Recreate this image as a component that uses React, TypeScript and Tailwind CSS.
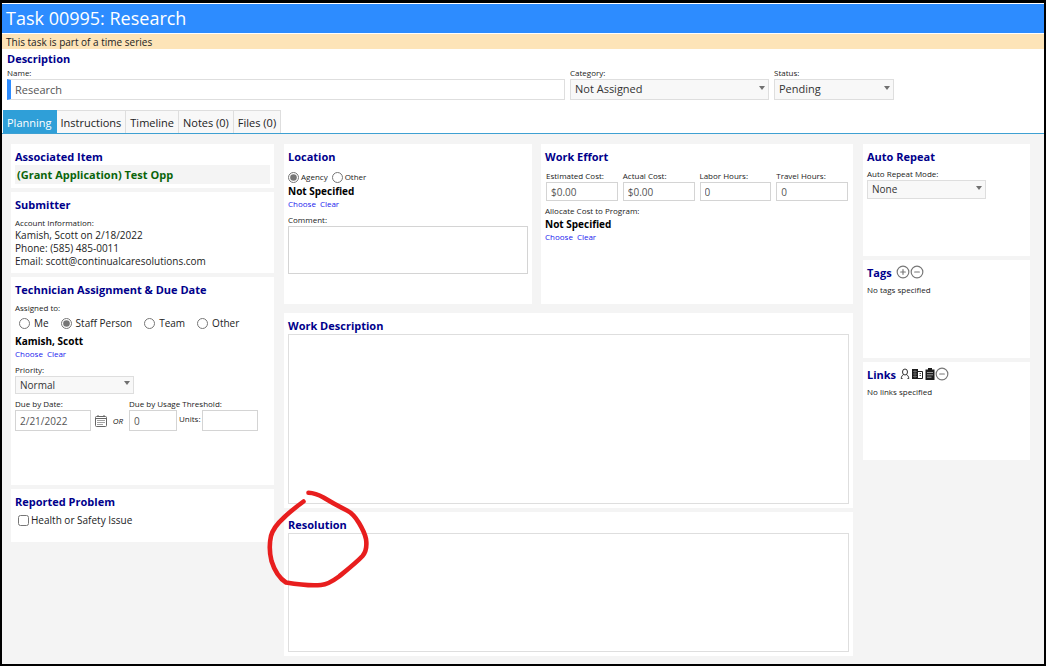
import React, { useState } from 'react';
import { CircleMinus, CirclePlus } from 'lucide-react';

const tabs = ['Planning', 'Instructions', 'Timeline', 'Notes (0)', 'Files (0)'];
const assignees = ['Me', 'Staff Person', 'Team', 'Other'];

const effortFields = [
  { id: 'estimated', label: 'Estimated Cost:', value: '$0.00' },
  { id: 'actual', label: 'Actual Cost:', value: '$0.00' },
  { id: 'labor', label: 'Labor Hours:', value: '0' },
  { id: 'travel', label: 'Travel Hours:', value: '0' },
];

interface PanelProps {
  title: string;
  className?: string;
  actions?: React.ReactNode;
  children?: React.ReactNode;
}

const Panel: React.FC<PanelProps> = ({ title, className = '', actions, children }) => (
  <section className={`bg-white px-1 pt-[5px] ${className}`}>
    <div className="flex items-start gap-1">
      <h2 className="text-[11px] leading-4 font-bold text-[#00008b]">{title}</h2>
      {actions}
    </div>
    {children}
  </section>
);

interface FieldLabelProps {
  htmlFor?: string;
  children: React.ReactNode;
}

const FieldLabel: React.FC<FieldLabelProps> = ({ htmlFor, children }) => (
  <label htmlFor={htmlFor} className="block text-[8px] leading-3 whitespace-nowrap text-[#222]">
    {children}
  </label>
);

interface DropdownProps {
  id: string;
  options: string[];
  className: string;
}

const Dropdown: React.FC<DropdownProps> = ({ id, options, className }) => (
  <div className="relative">
    <select
      id={id}
      className={`block w-full appearance-none border border-[#dedede] bg-[#f8f8f8] px-1 text-[#333] ${className}`}
    >
      {options.map((option) => (
        <option key={option}>{option}</option>
      ))}
    </select>
    <svg className="pointer-events-none absolute top-1/2 right-[3px] -mt-1 h-1 w-2" viewBox="0 0 8 4">
      <path d="M1 0h6L4 4z" fill="#707070" />
    </svg>
  </div>
);

const ChooseClear: React.FC = () => (
  <div className="flex gap-1 text-[8px] leading-3 text-[#1a1aee]">
    <a href="#choose">Choose</a>
    <a href="#clear">Clear</a>
  </div>
);

const CalendarIcon: React.FC = () => (
  <svg width="12" height="12" viewBox="0 0 12 12" fill="none" stroke="#666">
    <rect x="0.5" y="1.5" width="11" height="10" rx="1" />
    <path d="M0.5 3.5h11M3 0v2M9 0v2" />
    <path d="M2.5 5.5h7M2.5 7.5h7M2.5 9.5h5" stroke="#444" strokeDasharray="1 1" />
  </svg>
);

const PersonIcon: React.FC = () => (
  <svg width="10" height="12" viewBox="0 0 10 12" fill="none" stroke="#333">
    <ellipse cx="5" cy="4" rx="2.5" ry="3" />
    <path d="M3.6 6.6C2 7.4 1.4 8.600 1.200 10.500h1.300M6.400 6.600C8 7.400 8.600 8.600 8.800 10.500H7.500" />
  </svg>
);

const BuildingIcon: React.FC = () => (
  <svg width="11" height="12" viewBox="0 0 11 12">
    <path d="M0 1h6v10H0z" fill="#1c1c1c" />
    <path d="M1 3.500h4M1 6h4M1 8.500h4M3 2v8" stroke="#999" strokeWidth="0.5" />
    <path d="M6 3.500h4.500v7H6" fill="none" stroke="#1c1c1c" />
    <path d="M7.500 5.500H9M7.500 7.500H9" stroke="#555" />
  </svg>
);

const ClipboardIcon: React.FC = () => (
  <svg width="10" height="12" viewBox="0 0 10 12">
    <path d="M0.500 1.500h2.500V0h4v1.500h2.500V12h-9z" fill="#1c1c1c" />
    <path d="M2 4.500h6M2 6.800h6M2 9.200h4.500" stroke="#bbb" strokeWidth="0.8" />
  </svg>
);

export default function App() {
  const [activeTab, setActiveTab] = useState('Planning');
  const [assignee, setAssignee] = useState('Staff Person');
  const [location, setLocation] = useState('Agency');

  return (
    <div className="flex min-h-screen flex-col border-x-2 border-t-[3px] border-b-2 border-black bg-white font-['Open_Sans','Noto_Sans',sans-serif] text-[#222]">
      <header className="mt-px bg-[#2d8cff] px-1 pb-px text-white">
        <h1 className="text-lg leading-7">Task 00995: Research</h1>
      </header>
      <p className="mt-px bg-[#fde4b8] px-1 pt-px text-[10px] leading-[14px]">
        This task is part of a time series
      </p>

      <section className="px-[5px] pt-0.5">
        <h2 className="text-[11px] leading-4 font-bold text-[#00008b]">Description</h2>
        <div className="flex gap-[5px]">
          <div className="max-w-[558px] flex-1">
            <FieldLabel htmlFor="name">Name:</FieldLabel>
            <input
              id="name"
              defaultValue="Research"
              className="block h-[21px] w-full border border-l-4 border-[#dedede] border-l-[#2d8cff] px-1 text-[11px] text-[#555]"
            />
          </div>
          <div className="w-[199px]">
            <FieldLabel htmlFor="category">Category:</FieldLabel>
            <Dropdown id="category" options={['Not Assigned']} className="h-[21px] text-[11px]" />
          </div>
          <div className="w-[120px]">
            <FieldLabel htmlFor="status">Status:</FieldLabel>
            <Dropdown id="status" options={['Pending']} className="h-[21px] text-[11px]" />
          </div>
        </div>
      </section>

      <nav className="mt-2.5 flex border-b border-[#3ea0d2] px-px">
        {tabs.map((tab) => (
          <button
            key={tab}
            onClick={() => setActiveTab(tab)}
            className={`h-[23px] border-t border-r px-1 pt-0.5 text-[11px] ${
              tab === activeTab
                ? 'border-[#2f9fd8] bg-[#2f9fd8] text-white'
                : 'border-[#dedede] bg-[#f8f8f8] text-[#222]'
            }`}
          >
            {tab}
          </button>
        ))}
      </nav>

      <main className="flex flex-1 items-start gap-2.5 bg-[#f4f4f4] pt-2.5 pr-3.5 pb-2 pl-[9px]">
        <div className="flex w-[263px] shrink-0 flex-col gap-1">
          <Panel title="Associated Item" className="pb-1">
            <div className="bg-[#f4f4f4] px-0.5 text-[11px] leading-[19px] font-bold text-[#0a640a]">
              (Grant Application) Test Opp
            </div>
          </Panel>

          <Panel title="Submitter" className="min-h-[81px]">
            <div className="mt-1 text-[8px] leading-3">Account Information:</div>
            <div className="text-[10px] leading-[13px]">
              <p>Kamish, Scott on 2/18/2022</p>
              <p>Phone: (585) 485-0011</p>
              <p>Email: scott@continualcaresolutions.com</p>
            </div>
          </Panel>

          <Panel title="Technician Assignment &amp; Due Date" className="min-h-[208px]">
            <fieldset className="mt-1">
              <legend className="text-[8px] leading-3 text-[#222]">Assigned to:</legend>
              <div className="mt-0.5 flex gap-3 px-1">
                {assignees.map((name) => (
                  <label key={name} className="flex items-center gap-1 text-[10px] leading-[14px]">
                    <input
                      type="radio"
                      name="assignee"
                      checked={assignee === name}
                      onChange={() => setAssignee(name)}
                      className="size-[11px] accent-[#767676]"
                    />
                    {name}
                  </label>
                ))}
              </div>
            </fieldset>
            <div className="mt-1 text-[10px] leading-[14px] font-bold text-black">Kamish, Scott</div>
            <ChooseClear />
            <div className="mt-1 w-[119px]">
              <FieldLabel htmlFor="priority">Priority:</FieldLabel>
              <Dropdown id="priority" options={['Normal']} className="h-[18px] text-[10px]" />
            </div>
            <div className="mt-1 flex items-end">
              <div className="w-[76px]">
                <FieldLabel htmlFor="due">Due by Date:</FieldLabel>
                <input
                  id="due"
                  defaultValue="2/21/2022"
                  className="block h-[21px] w-full border border-[#d4d4d4] px-1 text-[10px] text-[#555]"
                />
              </div>
              <button aria-label="Pick a date" className="mb-1 ml-1">
                <CalendarIcon />
              </button>
              <span className="mb-1 w-[22px] text-center text-[8px] leading-3 italic">OR</span>
              <div>
                <FieldLabel htmlFor="threshold">Due by Usage Threshold:</FieldLabel>
                <div className="flex items-start">
                  <input
                    id="threshold"
                    defaultValue="0"
                    className="block h-[21px] w-12 border border-[#d4d4d4] px-1 text-[10px] text-[#555]"
                  />
                  <div className="w-[25px] pt-[3px] pl-0.5">
                    <FieldLabel htmlFor="units">Units:</FieldLabel>
                  </div>
                  <input id="units" className="block h-[21px] w-14 border border-[#d4d4d4] px-1 text-[10px]" />
                </div>
              </div>
            </div>
          </Panel>

          <Panel title="Reported Problem" className="min-h-[53px]">
            <label className="mt-[3px] flex items-center gap-0.5 pl-[3px] text-[10px] leading-[14px]">
              <input type="checkbox" className="size-[11px]" />
              Health or Safety Issue
            </label>
          </Panel>
        </div>

        <div className="flex min-w-0 flex-1 flex-col">
          <div className="flex gap-[9px]">
            <Panel title="Location" className="min-h-[160px] w-[248px]">
              <div className="mt-[5px] flex gap-1">
                {['Agency', 'Other'].map((name) => (
                  <label key={name} className="flex items-center gap-0.5 text-[8px] leading-[14px]">
                    <input
                      type="radio"
                      name="location"
                      checked={location === name}
                      onChange={() => setLocation(name)}
                      className="size-[11px] accent-[#767676]"
                    />
                    {name}
                  </label>
                ))}
              </div>
              <div className="text-[10px] leading-[14px] font-bold text-black">Not Specified</div>
              <ChooseClear />
              <div className="mt-1">
                <FieldLabel htmlFor="comment">Comment:</FieldLabel>
                <textarea id="comment" className="block h-12 w-full resize-none border border-[#d4d4d4] p-1 text-[10px]" />
              </div>
            </Panel>

            <Panel title="Work Effort" className="min-h-[160px] flex-1">
              <div className="mt-[5px] grid grid-cols-4 gap-[5px] px-px">
                {effortFields.map((field) => (
                  <div key={field.id}>
                    <FieldLabel htmlFor={field.id}>{field.label}</FieldLabel>
                    <input
                      id={field.id}
                      defaultValue={field.value}
                      className="block h-[19px] w-full border border-[#d4d4d4] px-1 text-[10px] text-[#555]"
                    />
                  </div>
                ))}
              </div>
              <div className="mt-1 text-[8px] leading-3">Allocate Cost to Program:</div>
              <div className="text-[10px] leading-[14px] font-bold text-black">Not Specified</div>
              <ChooseClear />
            </Panel>
          </div>

          <Panel title="Work Description" className="mt-[9px] pb-1">
            <textarea
              aria-label="Work Description"
              className="block h-[170px] w-full resize-none border border-[#dedede] p-1 text-[10px]"
            />
          </Panel>

          <div className="relative mt-1">
            <Panel title="Resolution" className="pb-1">
              <textarea
                aria-label="Resolution"
                className="block h-[119px] w-full resize-none border border-[#dedede] p-1 text-[10px]"
              />
            </Panel>
            {/* hand-drawn marker around the heading */}
            <svg
              className="pointer-events-none absolute -top-6 -left-5 h-[102px] w-[108px]"
              viewBox="264 488 108 102"
              fill="none"
              stroke="#e81e1e"
              strokeWidth="4.600"
              strokeLinecap="round"
              strokeLinejoin="round"
            >
              <path d="M308.500 492.800C314 493 319 495 323.500 497.500C330 501.500 340 507 347 510.500C352 513 356 518 359 523C362 528 365 534 366 539C367 546 366 552 362.500 556C357 562 347 570 339 576.500C333 581 327 584.500 321 585C310 586 298 584.500 286 582.500C279 578 274 569 271.500 561C269.500 553 269 545 271 536C273 529 278 523 283 518.500C289 512.500 296 507 303.500 501.500" />
            </svg>
          </div>
        </div>

        <div className="flex w-[167px] shrink-0 flex-col gap-1">
          <Panel title="Auto Repeat" className="min-h-[112px]">
            <div className="mt-[3px] w-[119px]">
              <FieldLabel htmlFor="repeat">Auto Repeat Mode:</FieldLabel>
              <Dropdown id="repeat" options={['None']} className="h-[19px] text-[10px]" />
            </div>
          </Panel>

          <Panel
            title="Tags"
            className="min-h-[98px]"
            actions={
              <div className="flex text-[#777]">
                <button aria-label="Add tag">
                  <CirclePlus size={14} strokeWidth={2} />
                </button>
                <button aria-label="Remove tag">
                  <CircleMinus size={14} strokeWidth={2} />
                </button>
              </div>
            }
          >
            <p className="mt-[3px] text-[8px] leading-3">No tags specified</p>
          </Panel>

          <Panel
            title="Links"
            className="min-h-[98px]"
            actions={
              <div className="flex items-center text-[#777]">
                <button aria-label="Link person" className="mr-0.5">
                  <PersonIcon />
                </button>
                <button aria-label="Link company" className="mr-0.5">
                  <BuildingIcon />
                </button>
                <button aria-label="Link task">
                  <ClipboardIcon />
                </button>
                <button aria-label="Remove link">
                  <CircleMinus size={14} strokeWidth={2} />
                </button>
              </div>
            }
          >
            <p className="mt-[3px] text-[8px] leading-3">No links specified</p>
          </Panel>
        </div>
      </main>
    </div>
  );
}
